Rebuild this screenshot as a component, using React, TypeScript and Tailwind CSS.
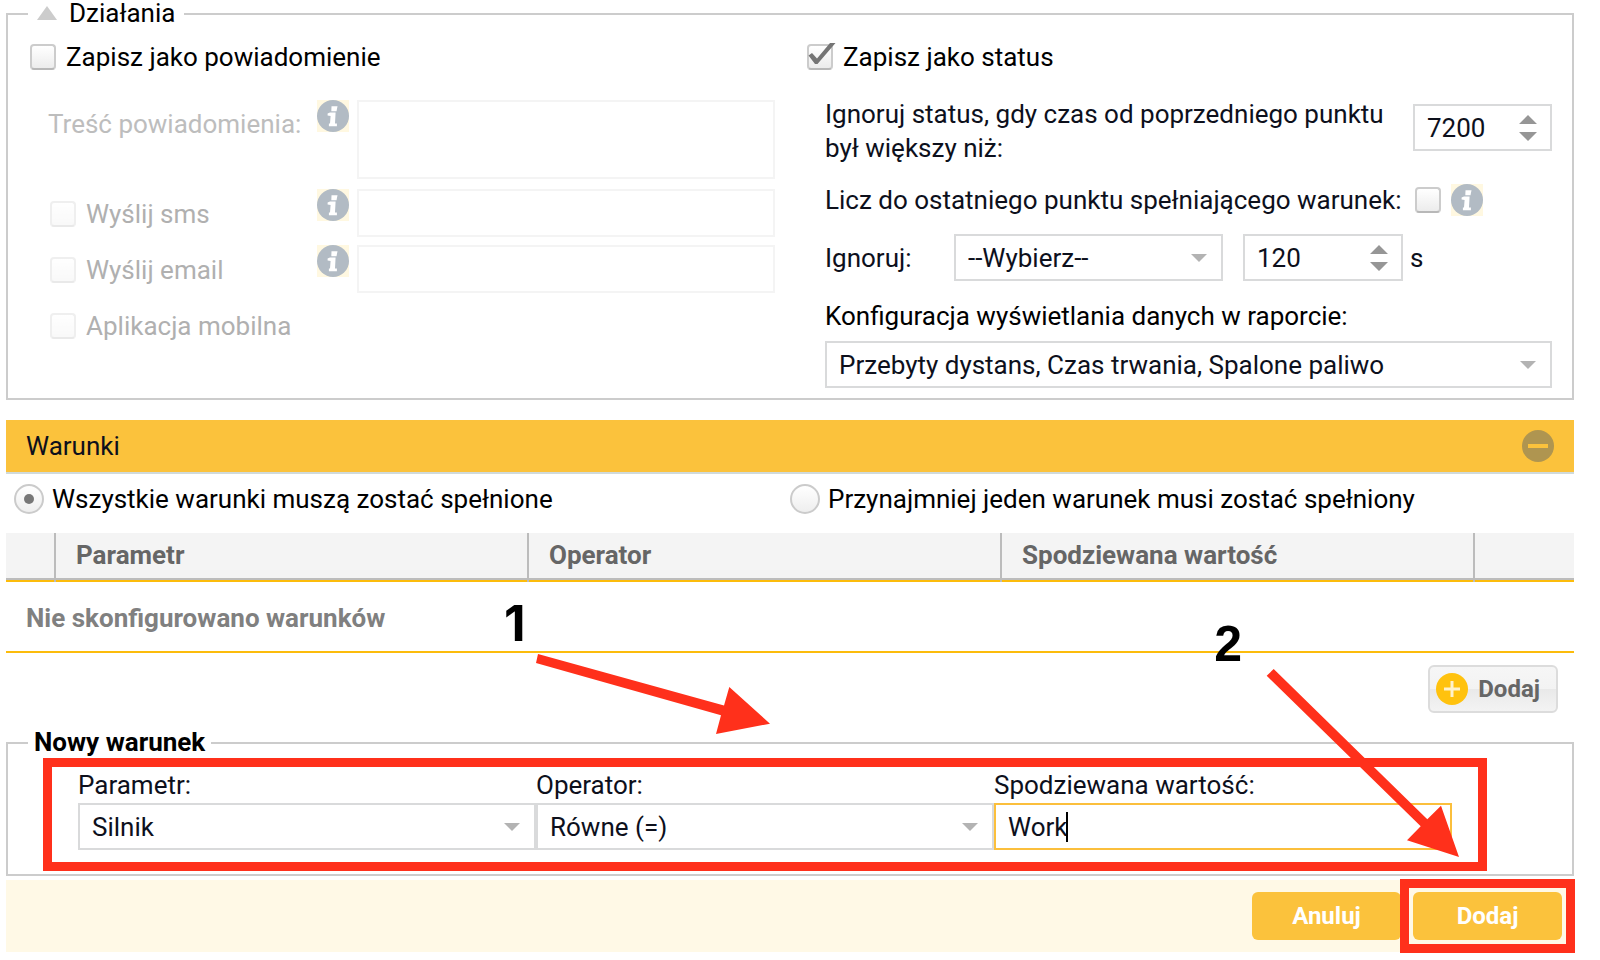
import { useId, type ReactNode } from 'react';

const fieldBase = 'w-full h-[47px] border-2 border-[#d9dadb] bg-white text-[26px] text-[#0d101c] outline-none';

function InfoIcon() {
  return (
    <svg viewBox="0 0 32 32" className="size-8 shrink-0 bg-[#fff8e1]" aria-hidden="true">
      <circle cx="16" cy="16" r="16" fill="#b2bbc4" />
      <path d="M14.5 6.2h6l-1 5h-5.2z" fill="#fff" />
      <path d="M10.6 13.4l2.4-1h5.6l-.6 11h1.9v2.9h-8v-2.9h1.1l.6-7.4-3-.6z" fill="#fff" />
    </svg>
  );
}

function Checkbox({ id, checked, disabled }: { id: string; checked?: boolean; disabled?: boolean }) {
  return (
    <span className={`relative block size-[26px] shrink-0 ${disabled ? 'opacity-30' : ''}`}>
      <input
        id={id}
        type="checkbox"
        defaultChecked={checked}
        disabled={disabled}
        className="block size-[26px] appearance-none rounded-[4px] border-2 border-[#cccccc] border-b-[#b8b8b8] bg-linear-to-b from-white to-[#ececec]"
      />
      {checked && (
        <svg viewBox="0 0 30 30" className="pointer-events-none absolute -top-[3px] left-0 size-[30px]" aria-hidden="true">
          <path d="M1.5 14.5l3.5-2.5 5 5.5L23 2h5.5L10.5 23H8z" fill="#757575" />
        </svg>
      )}
    </span>
  );
}

function SelectBox({ id, value }: { id: string; value: string }) {
  return (
    <div className="relative">
      <select id={id} defaultValue={value} className={`${fieldBase} appearance-none pl-3 pr-12`}>
        <option>{value}</option>
      </select>
      <svg viewBox="0 0 16 8" className="pointer-events-none absolute right-4 top-5 h-2 w-4" aria-hidden="true">
        <path d="M0 0h16L8 8z" fill="#b3b3b3" />
      </svg>
    </div>
  );
}

function NumberBox({ id, value }: { id: string; value: string }) {
  return (
    <div className="relative">
      <input id={id} type="text" inputMode="numeric" defaultValue={value} className={`${fieldBase} pl-3 pr-12`} />
      <svg viewBox="0 0 18 26" className="pointer-events-none absolute right-[15px] top-[11px] h-[26px] w-[18px]" aria-hidden="true">
        <path d="M9 0l9 9H0zM0 17h18l-9 9z" fill="#969696" />
      </svg>
    </div>
  );
}

function NotifyRow({ label }: { label: string }) {
  const id = useId();
  return (
    <div className="flex h-12 items-start">
      <div className="flex h-[50px] w-[267px] items-center gap-[10px]">
        <Checkbox id={id} disabled />
        <label htmlFor={id} className="text-[#b0b0b0]">{label}</label>
      </div>
      <InfoIcon />
      <input aria-label={label} disabled className="ml-2 h-12 min-w-0 flex-1 border-2 border-[#f4f4f4] bg-white" />
    </div>
  );
}

function RadioOption({ label, checked }: { label: string; checked?: boolean }) {
  return (
    <label className="flex h-[50px] items-center gap-2">
      <span className="relative block size-[30px]">
        <input
          type="radio"
          name="match"
          defaultChecked={checked}
          className="block size-[30px] appearance-none rounded-full border-2 border-[#cbcbcb] bg-linear-to-b from-white to-[#eeeeee]"
        />
        {checked && <span className="absolute left-[10px] top-[10px] size-[10px] rounded-full bg-[#777]" />}
      </span>
      {label}
    </label>
  );
}

function Field({ id, label, children }: { id: string; label: string; children: ReactNode }) {
  return (
    <div>
      <label htmlFor={id} className="mb-[2px] block leading-8 text-[#0d101c]">{label}</label>
      {children}
    </div>
  );
}

function ActionsPanel() {
  return (
    <fieldset className="min-w-0 border-2 border-[#ccc] pb-[10px]">
      <legend className="ml-5 flex h-7 items-start px-[9px] leading-[26px]">
        <svg viewBox="0 0 20 14" className="mr-3 mt-[6px] h-[14px] w-5" aria-hidden="true">
          <path d="M10 0l10 14H0z" fill="#ccc" />
        </svg>
        Działania
      </legend>
      <div className="mt-4 grid grid-cols-2">
        <div className="pl-[22px] pr-[15px]">
          <div className="flex h-[26px] items-center gap-[10px]">
            <Checkbox id="notify" />
            <label htmlFor="notify">Zapisz jako powiadomienie</label>
          </div>
          <div className="mt-[30px] flex flex-col gap-2 pl-[18px]">
            <div className="flex items-start pb-[2px]">
              <label htmlFor="content" className="mt-[10px] w-[269px] leading-7 text-[#bdbdbd]">
                Treść powiadomienia:
              </label>
              <InfoIcon />
              <textarea id="content" disabled className="ml-2 block h-[79px] min-w-0 flex-1 resize-none border-2 border-[#f4f4f4] bg-white" />
            </div>
            <div className="flex flex-col gap-2 pl-[2px]">
              <NotifyRow label="Wyślij sms" />
              <NotifyRow label="Wyślij email" />
              <div className="flex h-[50px] items-center gap-[10px]">
                <Checkbox id="mobile" disabled />
                <label htmlFor="mobile" className="text-[#b0b0b0]">Aplikacja mobilna</label>
              </div>
            </div>
          </div>
        </div>

        <div className="pl-[17px] pr-5">
          <div className="flex h-[26px] items-center gap-[10px]">
            <Checkbox id="status" checked />
            <label htmlFor="status">Zapisz jako status</label>
          </div>
          <div className="mt-[27px] pl-[18px] text-[#0d101c]">
            <div className="flex items-start">
              <label htmlFor="ignore-time" className="flex-1 leading-[34px]">
                Ignoruj status, gdy czas od poprzedniego punktu był większy niż:
              </label>
              <div className="mt-[7px] w-[139px]">
                <NumberBox id="ignore-time" value="7200" />
              </div>
            </div>
            <div className="mt-[19px] flex h-8 items-center">
              <label htmlFor="last-point" className="mr-[14px]">Licz do ostatniego punktu spełniającego warunek:</label>
              <Checkbox id="last-point" />
              <div className="ml-[10px]">
                <InfoIcon />
              </div>
            </div>
            <div className="mt-[18px] flex items-center">
              <label htmlFor="ignore" className="w-[129px]">Ignoruj:</label>
              <div className="w-[269px]">
                <SelectBox id="ignore" value="--Wybierz--" />
              </div>
              <div className="ml-5 w-[160px]">
                <NumberBox id="ignore-seconds" value="120" />
              </div>
              <label htmlFor="ignore-seconds" className="ml-[7px]">s</label>
            </div>
            <label htmlFor="report" className="mb-[11px] mt-[21px] block leading-7 text-black">
              Konfiguracja wyświetlania danych w raporcie:
            </label>
            <SelectBox id="report" value="Przebyty dystans, Czas trwania, Spalone paliwo" />
          </div>
        </div>
      </div>
    </fieldset>
  );
}

function ConditionsTable() {
  return (
    <table className="w-full table-fixed border-collapse text-left">
      <thead>
        <tr className="h-12 border-b-2 border-[#fcbc0c] bg-[#f4f4f4] text-[#666] shadow-[inset_0_-3px_0_#bcbcbc]">
          <th className="w-[49px] border-r-2 border-[#bcbcbc]" aria-label="Lp." />
          <th className="border-r-2 border-[#bcbcbc] pb-[3px] pl-5 font-bold">Parametr</th>
          <th className="border-r-2 border-[#bcbcbc] pb-[3px] pl-5 font-bold">Operator</th>
          <th className="border-r-2 border-[#bcbcbc] pb-[3px] pl-5 font-bold">Spodziewana wartość</th>
          <th className="w-[100px]" aria-label="Akcje" />
        </tr>
      </thead>
      <tbody>
        <tr className="h-[71px] border-b-2 border-[#fcbc0c]">
          <td colSpan={5} className="pl-5 pt-[2px] font-bold text-[#808080]">Nie skonfigurowano warunków</td>
        </tr>
      </tbody>
    </table>
  );
}

function NewCondition() {
  return (
    <fieldset className="mt-4 min-w-0 border-2 border-[#ccc] pb-6">
      <legend className="ml-5 h-7 px-[6px] font-bold leading-[26px]">Nowy warunek</legend>
      <div className="relative ml-[70px] mr-[120px] mt-3 grid grid-cols-3">
        <Field id="param" label="Parametr:">
          <SelectBox id="param" value="Silnik" />
        </Field>
        <Field id="operator" label="Operator:">
          <SelectBox id="operator" value="Równe (=)" />
        </Field>
        <Field id="expected" label="Spodziewana wartość:">
          <div className="relative">
            <input
              id="expected"
              type="text"
              defaultValue="Work"
              className="h-[47px] w-full border-2 border-[#fbbf3c] bg-white px-3 text-[26px] text-[#0d101c] outline-none"
            />
            <span className="absolute left-[72px] top-[9px] h-[30px] w-[2px] bg-black" />
          </div>
        </Field>
        <div className="pointer-events-none absolute -bottom-[21px] -left-[35px] -right-[35px] -top-[11px] border-[9px] border-[#ff301b]" />
      </div>
    </fieldset>
  );
}

export default function App() {
  return (
    <main className="relative min-w-[1500px] bg-white pb-2 pl-[6px] pr-[26px] font-['Roboto',sans-serif] text-[26px] leading-8 text-black">
      <ActionsPanel />

      <section className="mt-5">
        <header className="flex h-[54px] items-center justify-between border-b-2 border-[#d0dadb] bg-[#fbc23c] pl-5 pr-5 text-[#0d101c]">
          <h2>Warunki</h2>
          <button type="button" aria-label="Zwiń">
            <svg viewBox="0 0 32 32" className="block size-8" aria-hidden="true">
              <circle cx="16" cy="16" r="16" fill="#af9550" />
              <rect x="6" y="14" width="20" height="4" fill="#fbc23c" />
            </svg>
          </button>
        </header>
        <div className="mb-[9px] grid grid-cols-2">
          <div className="pl-2">
            <RadioOption label="Wszystkie warunki muszą zostać spełnione" checked />
          </div>
          <RadioOption label="Przynajmniej jeden warunek musi zostać spełniony" />
        </div>
        <ConditionsTable />
        <div className="mt-3 flex justify-end pr-4">
          <button
            type="button"
            className="flex h-12 items-center gap-[10px] rounded-[6px] border-2 border-[#dcdcdc] bg-[linear-gradient(#f6f6f6,#f3f3f3_50%,#e9e9e9_50%,#f3f3f3)] pl-[6px] pr-4 text-[24px] font-bold text-[#666]"
          >
            <svg viewBox="0 0 32 32" className="size-8" aria-hidden="true">
              <circle cx="16" cy="16" r="16" fill="#ffc20e" />
              <path d="M16 8v16M8 16h16" stroke="#fff2cc" strokeWidth="3" />
            </svg>
            Dodaj
          </button>
        </div>
      </section>

      <NewCondition />

      <footer className="mt-1 flex justify-end gap-3 bg-[#fff9e6] py-3 pr-3 text-[24px] font-bold text-white">
        <button type="button" className="h-12 w-[149px] rounded-[6px] bg-[#fbc23c]">Anuluj</button>
        <div className="relative">
          <button type="button" className="h-12 w-[149px] rounded-[6px] bg-[#fbc23c]">Dodaj</button>
          <div className="pointer-events-none absolute -inset-[13px] border-[9px] border-[#ff301b]" />
        </div>
      </footer>

      {/* numbered steps over the form */}
      <span className="absolute left-[504px] top-[593px] font-['Inter',sans-serif] text-[50px] font-bold leading-[60px]">1</span>
      <svg viewBox="0 0 234 80" className="pointer-events-none absolute left-[536px] top-[654px] h-20 w-[234px]" aria-hidden="true">
        <path d="M2 0L188 51.5L193.3 33L234 69.7L180 80L185 61.3L0 9z" fill="#ff301b" />
      </svg>
      <span className="absolute right-[358px] top-[614px] font-['Liberation_Sans',sans-serif] text-[50px] font-bold leading-[60px]">2</span>
      <svg viewBox="0 0 193 188" className="pointer-events-none absolute right-[141px] top-[669px] h-[188px] w-[193px]" aria-hidden="true">
        <path d="M7.7 0L161.3 150.3L175 136.7L193 188L141 171.3L154.7 157.3L.7 6.7z" fill="#ff301b" />
      </svg>
    </main>
  );
}
